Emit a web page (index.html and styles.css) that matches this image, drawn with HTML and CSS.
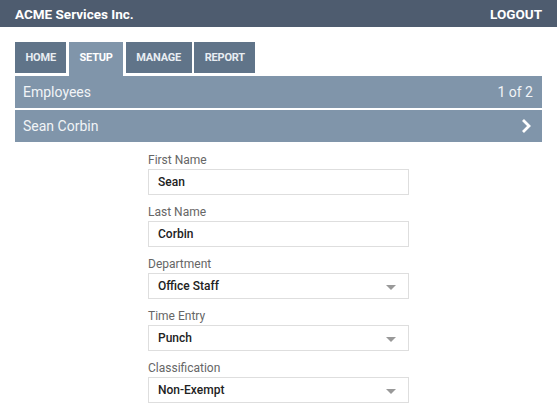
FILE: index.html
```html
<!DOCTYPE html>
<html>
<head>
<meta charset="utf-8">
<link rel="stylesheet" href="styles.css">
</head>
<body>
<header class="topbar">
  <div class="brand">ACME Services Inc.</div>
  <div class="logout">LOGOUT</div>
</header>
<main class="main">
  <nav class="tabs">
    <div class="tab">HOME</div>
    <div class="tab active">SETUP</div>
    <div class="tab">MANAGE</div>
    <div class="tab">REPORT</div>
  </nav>
  <div class="bar">
    <span>Employees</span>
    <span>1 of 2</span>
  </div>
  <div class="bar bar-second">
    <span>Sean Corbin</span>
    <svg class="chev" width="10" height="16" viewBox="0 0 10 16"><polyline points="2,2 8,8 2,14" fill="none" stroke="#fff" stroke-width="2.8"/></svg>
  </div>
  <form class="form">
    <div class="field">
      <label class="label">First Name</label>
      <div class="input">Sean</div>
    </div>
    <div class="field">
      <label class="label">Last Name</label>
      <div class="input">Corbin</div>
    </div>
    <div class="field">
      <label class="label">Department</label>
      <div class="input select">Office Staff<span class="caret"></span></div>
    </div>
    <div class="field">
      <label class="label">Time Entry</label>
      <div class="input select">Punch<span class="caret"></span></div>
    </div>
    <div class="field">
      <label class="label">Classification</label>
      <div class="input select">Non-Exempt<span class="caret"></span></div>
    </div>
  </form>
</main>
</body>
</html>
```

FILE: styles.css
```css
* { box-sizing: border-box; }
html, body { margin: 0; padding: 0; background: #fff; }
body { font-family: Roboto, "Liberation Sans", sans-serif; }

.topbar {
  height: 27px;
  background: #4e5c6f;
  display: flex;
  align-items: center;
  justify-content: space-between;
  padding: 0 15px;
  color: #fff;
  font-weight: 700;
  font-size: 13.5px;
}

.main { padding: 15px 15px 0; }

.tabs { display: flex; align-items: flex-start; gap: 2.6px; height: 34px; }
.tab {
  height: 31px;
  line-height: 31px;
  padding: 0 10.5px;
  background: #607489;
  color: #e8edf2;
  font-weight: 700;
  font-size: 11px;
  letter-spacing: -0.2px;
}
.tab.active { height: 34px; background: #8095aa; color: #fff; padding-bottom: 3px; line-height: 31px; }

.bar {
  height: 32px;
  background: #8095aa;
  color: #f1f4f7;
  font-size: 14px;
  display: flex;
  align-items: center;
  justify-content: space-between;
  padding: 0 9px 0 8px;
}
.bar-second { margin-top: 1.6px; padding-right: 11px; }
.chev { display: block; }

.form { width: 261px; margin: 0 auto; padding-top: 10px; }
.field { margin-bottom: 9px; }
.label {
  display: block;
  height: 16px;
  line-height: 16px;
  margin-bottom: 1px;
  font-size: 12px;
  color: #666;
}
.input {
  height: 26px;
  border: 1px solid #dedede;
  padding: 0 9px;
  display: flex;
  align-items: center;
  font-size: 12px;
  font-weight: 500;
  color: #222;
  position: relative;
}
.caret {
  position: absolute;
  right: 12px;
  top: 11px;
  width: 0; height: 0;
  border-left: 5px solid transparent;
  border-right: 5px solid transparent;
  border-top: 5px solid #999;
}
```
